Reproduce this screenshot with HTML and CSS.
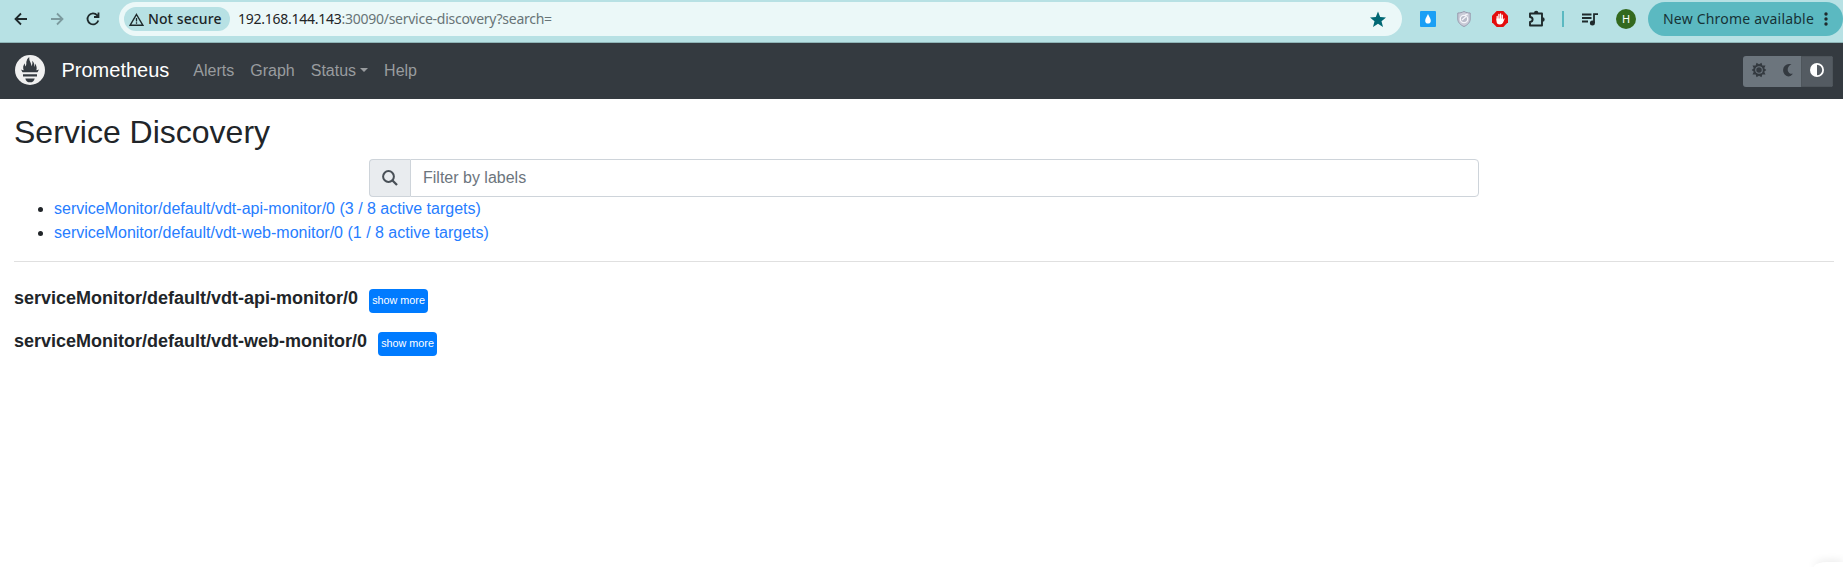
FILE: index.html
```html
<!DOCTYPE html>
<html lang="en">
<head>
<meta charset="utf-8">
<title>Prometheus Time Series Collection and Processing Server</title>
<link rel="stylesheet" href="styles.css">
</head>
<body>
<header class="browser">
  <div class="nav-buttons">
    <svg width="14" height="14" viewBox="0 0 14 14" fill="none" stroke="#1f2a2c" stroke-width="1.8"><path d="M13 7H2M7 1.5L1.5 7L7 12.5"/></svg>
    <svg width="14" height="14" viewBox="0 0 14 14" fill="none" stroke="#7c9a9e" stroke-width="1.8"><path d="M1 7h11M7 1.5L12.500 7L7 12.500"/></svg>
    <svg width="14" height="14" viewBox="0 0 14 14" fill="none" stroke="#1f2a2c" stroke-width="1.8"><path d="M12.300 8.500A5.500 5.500 0 1 1 11.200 3.300L12.300 4.600M12.500 .5V5H8"/></svg>
  </div>
  <div class="omnibox">
    <div class="security">
      <svg width="15" height="13" viewBox="0 0 15 13"><path d="M7.500 1.500L13.800 12.200H1.200Z" fill="none" stroke="#1f2a2c" stroke-width="1.400"/><path d="M7.500 5v3.500M7.500 9.300v1.500" stroke="#1f2a2c" stroke-width="1.300"/></svg>
      <span class="security-text">Not secure</span>
    </div>
    <div class="url"><span class="host">192.168.144.143</span><span class="path">:30090/service-discovery?search=</span></div>
    <svg class="star" width="18" height="17" viewBox="0 0 18 17"><path d="M9 .5L11.200 6L17 6.400L12.500 10.200L14 16L9 12.800L4 16L5.500 10.200L1 6.400L6.800 6Z" fill="#006874"/></svg>
  </div>
  <div class="extensions">
    <svg width="16" height="16" viewBox="0 0 16 16"><rect width="16" height="16" rx="1" fill="#1a9ff5"/><path d="M8 3C9 5.500 10.800 7.300 10.800 9.800A2.800 2.800 0 0 1 5.200 9.800C5.200 7.300 7 5.500 8 3Z" fill="#fff"/></svg>
    <svg width="16" height="16" viewBox="0 0 16 16"><path d="M8 .5C10 1.500 12 2 14.200 2V8C14.200 11.500 11.500 14 8 15.500C4.500 14 1.800 11.500 1.800 8V2C4 2 6 1.500 8 .5Z" fill="#c9cbd8" stroke="#9799ad"/><circle cx="8" cy="8" r="3.700" fill="#b7bac8" stroke="#f5f5fa" stroke-width="1.300"/><path d="M6 9l4-3.500M9 4l3-1" stroke="#f5f5fa" stroke-width="1.300"/></svg>
    <svg width="16" height="16" viewBox="0 0 16 16"><path d="M4.700 0h6.600L16 4.700v6.600L11.300 16H4.700L0 11.300V4.700Z" fill="#e40d0d"/><path d="M5.200 9V5.500M6.900 8V3.500M8.600 8V2.900M10.300 8V4.200" stroke="#fff" stroke-width="1.300" stroke-linecap="round"/><path d="M4.500 7.500H11V9L11.700 7.600Q12.700 7 12.600 7.900L11 11.800Q10.300 13.500 8 13.500Q4.500 13.500 4.500 10Z" fill="#fff"/></svg>
    <svg width="18" height="18" viewBox="0 0 18 18"><path d="M2 3.500H14V15.500H2V12Q4.600 11.700 4.600 9.500Q4.600 7.300 2 7Z" fill="none" stroke="#1f2a2c" stroke-width="1.900" stroke-linejoin="round"/><path d="M6 3a2.200 2.200 0 0 1 4.400 0ZM14.500 7.300a2.200 2.200 0 0 1 0 4.400Z" fill="#1f2a2c"/></svg>
    <span class="divider"></span>
    <svg class="media" width="17" height="13" viewBox="0 0 17 13"><path d="M0 1.500H9.500M0 5H9.500M0 8.500H6M12 10V1.200H16" fill="none" stroke="#1f2a2c" stroke-width="1.800"/><circle cx="10.400" cy="10" r="2.500" fill="#1f2a2c"/></svg>
    <span class="avatar">H</span>
  </div>
  <div class="update"><span class="update-text">New Chrome available</span>
    <svg width="4" height="14" viewBox="0 0 4 14" fill="#1f2a2c"><circle cx="2" cy="2" r="1.700"/><circle cx="2" cy="7" r="1.700"/><circle cx="2" cy="12" r="1.700"/></svg>
  </div>
</header>
<nav class="navbar">
  <svg class="logo" width="30" height="30" viewBox="0 0 30 30"><circle cx="15" cy="15" r="15" fill="#f0f0f0"/><path d="M7.500 17.300L6 14.500Q7.500 15.500 8.700 15.300Q7.200 11.500 9.800 8.300Q9.800 10.500 10.600 11.500Q11.700 9.500 11.300 7Q11.400 4 14.200 2Q14 5 15.300 7Q16.600 9.500 16.400 11.300Q17.900 9.300 17.300 5.800Q20 8.600 19.200 12Q20.400 10.700 20 8.500Q22.500 12 21.300 15.300Q22.700 15.300 24 14.500L22.500 17.300Z" fill="#343a40"/><path d="M8 19.200H22V21.500H8ZM10.300 23.400H19.700Q18.700 27.300 15 27.300Q11.300 27.300 10.300 23.400Z" fill="#343a40"/></svg>
  <a class="brand">Prometheus</a>
  <a class="nav-link">Alerts</a>
  <a class="nav-link">Graph</a>
  <a class="nav-link dropdown">Status</a>
  <a class="nav-link">Help</a>
  <div class="theme-toggle">
    <span class="theme-option sun"><svg width="16" height="16" viewBox="0 0 16 16"><path d="M8 2.300L10.500 .7L11.300 3.500L14.500 3.400L13.200 6.300L15.300 8L13.200 9.700L14.500 12.600L11.300 12.500L10.500 15.300L8 13.700L5.500 15.300L4.700 12.500L1.500 12.600L2.800 9.700L.7 8L2.800 6.300L1.500 3.400L4.700 3.500L5.500 .7Z" fill="#343a40"/><circle cx="8" cy="8" r="3.300" fill="none" stroke="#6c757d" stroke-width="1.100"/></svg></span>
    <span class="theme-option moon"><svg width="14" height="14" viewBox="0 0 14 14"><path d="M8 1Q9.500 .8 10.500 1.300Q6.500 3.300 6.700 7.200Q7.600 11.300 12 10.800Q10 13.500 7.300 13.500A6.300 6.300 0 0 1 8 1Z" fill="#343a40"/></svg></span>
    <span class="theme-option active"><svg width="14" height="14" viewBox="0 0 14 14"><circle cx="7" cy="7" r="7" fill="#fff"/><path d="M7 1.800A5.200 5.200 0 0 1 7 12.200Z" fill="#545b62"/></svg></span>
  </div>
</nav>
<main class="content">
  <h2 class="title">Service Discovery</h2>
  <div class="filter">
    <span class="filter-icon"><svg width="16" height="16" viewBox="0 0 16 16" fill="none" stroke="#495057"><circle cx="6.500" cy="6.500" r="5.400" stroke-width="2"/><path d="M10.500 10.500L15 15" stroke-width="2.300"/></svg></span>
    <input class="filter-input" type="text" placeholder="Filter by labels">
  </div>
  <ul class="targets">
    <li><a class="link">serviceMonitor/default/vdt-api-monitor/0 (3 / 8 active targets)</a></li>
    <li><a class="link">serviceMonitor/default/vdt-web-monitor/0 (1 / 8 active targets)</a></li>
  </ul>
  <hr class="rule">
  <section class="pool"><h3 class="pool-name">serviceMonitor/default/vdt-api-monitor/0</h3><button class="more">show more</button></section>
  <section class="pool"><h3 class="pool-name">serviceMonitor/default/vdt-web-monitor/0</h3><button class="more">show more</button></section>
</main>
<div class="corner-popup"></div>
</body>
</html>
```
FILE: styles.css
```css
* { box-sizing: border-box; }
body {
  margin: 0;
  height: 567px;
  position: relative;
  overflow: hidden;
  background: #fff;
  color: #212529;
  font: 16px/24px "Liberation Sans", Arial, sans-serif;
}
svg { display: block; flex: none; }
.browser {
  display: flex;
  height: 43px;
  padding-top: 2px;
  align-items: flex-start;
  background: #b7e1e4;
  border-bottom: 1px solid #8fb5b8;
  font-family: "Noto Sans", sans-serif;
  white-space: nowrap;
}
.nav-buttons { display: flex; gap: 22px; height: 34px; width: 119px; padding-left: 14px; align-items: center; }
.omnibox {
  display: flex;
  align-items: center;
  width: 1283px;
  height: 34px;
  padding: 0 15px 0 5px;
  border-radius: 17px;
  background: #ebf8f8;
}
.security {
  display: flex;
  align-items: center;
  gap: 4px;
  width: 106px;
  height: 24px;
  padding-left: 5px;
  border-radius: 12px;
  background: #b7e1e4;
  color: #1b2527;
}
.security-text { font-size: 14px; font-weight: 500; letter-spacing: .1px; }
.url { margin-left: 8px; flex: 1; font-size: 14px; letter-spacing: -.26px; }
.host { color: #1f2426; }
.path { color: #687477; }
.extensions { display: flex; align-items: center; height: 34px; padding-left: 18px; gap: 20px; width: 246px; }
.divider { width: 2px; height: 16px; margin: 0 -4px; background: #5bb9c1; }
.media { margin: 0 -3px 0 2px; }
.avatar {
  width: 20px;
  height: 20px;
  border-radius: 50%;
  background: #33691e;
  color: #fff;
  font-size: 11px;
  line-height: 20px;
  text-align: center;
}
.update {
  display: flex;
  align-items: center;
  width: 195px;
  height: 34px;
  padding: 0 15px;
  justify-content: space-between;
  border-radius: 17px;
  background: #5bb9c1;
  color: #163236;
  font-size: 14px;
  letter-spacing: .2px;
}
.navbar { display: flex; height: 56px; padding: 0 10px 0 15px; align-items: center; background: #343a40; }
.logo { margin-top: -2px; }
.brand { margin: -2px 16px 0 16.500px; color: #fff; font-size: 20px; line-height: 30px; }
.nav-link { padding: 0 8px; color: #999c9f; }
.dropdown::after {
  content: "";
  display: inline-block;
  margin-left: 4px;
  vertical-align: 4px;
  border-top: 4px solid;
  border-left: 4px solid transparent;
  border-right: 4px solid transparent;
}
.theme-toggle { display: flex; width: 90px; height: 31px; margin-left: auto; border-radius: 3px; overflow: hidden; background: #6c757d; }
.theme-option { display: flex; width: 32px; align-items: center; justify-content: center; padding-bottom: 3px; }
.moon { width: 26px; }
.active { background: #545b62; border: 1px solid #4e555b; padding-bottom: 2px; }
.content { padding: 14px 9px 0 14px; }
.title { margin: 0 0 8px; font-size: 32px; font-weight: 400; line-height: 38px; }
.filter { display: flex; width: 1110px; height: 38px; margin-left: 355px; }
.filter-icon {
  display: flex;
  align-items: center;
  justify-content: center;
  width: 41px;
  border: 1px solid #ced4da;
  border-right: 0;
  border-radius: 4px 0 0 4px;
  background: #e9ecef;
}
.filter-input {
  flex: 1;
  padding: 6px 12px;
  border: 1px solid #ced4da;
  border-radius: 0 4px 4px 0;
  color: #495057;
  font: inherit;
}
.filter-input::placeholder { color: #6c757d; opacity: 1; }
.targets { margin: 0 0 16px; padding-left: 40px; }
.link { color: #267dff; }
.rule { margin: 0; border: 0; border-top: 1px solid #e0e0e0; }
.pool { display: flex; height: 43px; gap: 11px; }
.rule + .pool { margin-top: 24px; }
.pool-name { margin: 0; font-size: 18px; line-height: 24px; }
.more {
  width: 59px;
  height: 23.500px;
  margin-top: 3px;
  padding: 0 0 1px;
  border: 0;
  border-radius: 4px;
  background: #007bff;
  color: #fff;
  font: 10.800px/22px "Liberation Sans", Arial, sans-serif;
}
.corner-popup {
  position: absolute;
  right: 0;
  bottom: 0;
  width: 29px;
  height: 5px;
  border-top-left-radius: 14px 5px;
  background: #fff;
  box-shadow: 0 0 10px rgba(0, 0, 0, .14);
}
```
